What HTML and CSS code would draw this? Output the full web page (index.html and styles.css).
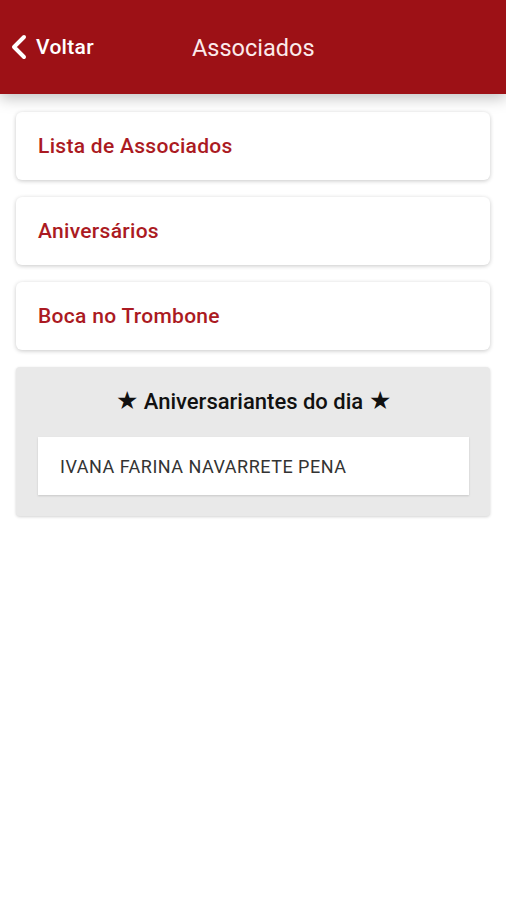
FILE: index.html
```html
<!DOCTYPE html>
<html>
<head>
    <meta charset="UTF-8"/>
    <title>Associados</title>
    <link rel="stylesheet" href="styles.css">
</head>
<body>
<div class="header">
    <a class="back" href="#">
        <svg class="chevron" width="18" height="26" viewBox="0 0 18 26">
            <path d="M14 3 L4 13 L14 23" fill="none" stroke="#fff" stroke-width="4" stroke-linecap="round" stroke-linejoin="round"/>
        </svg>
        <span>Voltar</span>
    </a>
    <div class="title">Associados</div>
</div>
<div class="content">
    <a class="card" href="#">Lista de Associados</a>
    <a class="card" href="#">Aniversários</a>
    <a class="card" href="#">Boca no Trombone</a>
    <div class="panel">
        <div class="panelTitle"><span class="star">★</span> Aniversariantes do dia <span class="star">★</span></div>
        <div class="person">IVANA FARINA NAVARRETE PENA</div>
    </div>
</div>
</body>
</html>
```
FILE: styles.css
```css
*{
    margin: 0;
    padding: 0;
    box-sizing: border-box;
}
body{
    font-family: Roboto, "Liberation Sans", sans-serif;
    background: #fff;
    width: 506px;
    height: 900px;
}
.header{
    position: relative;
    height: 94px;
    background: #9d1116;
    box-shadow: 0 4px 14px rgba(0,0,0,0.25);
    display: flex;
    align-items: center;
    color: #fff;
    z-index: 1;
}
.back{
    display: flex;
    align-items: center;
    padding-left: 10px;
    color: #fff;
    text-decoration: none;
    font-size: 21px;
    font-weight: 500;
    letter-spacing: 0.3px;
}
.chevron{
    margin-right: 8px;
}
.title{
    position: absolute;
    left: 192px;
    top: 0;
    line-height: 97px;
    font-size: 23.5px;
    color: #fbeaea;
}
.content{
    padding: 18px 16px;
    display: flex;
    flex-direction: column;
    gap: 17px;
}
.card{
    height: 68px;
    display: flex;
    align-items: center;
    padding-left: 22px;
    background: #fff;
    border-radius: 6px;
    box-shadow: 0 1px 4px rgba(0,0,0,0.22);
    color: #ab1a22;
    font-size: 21px;
    font-weight: 500;
    letter-spacing: 0.3px;
    text-decoration: none;
}
.panel{
    background: #e9e9e9;
    border-radius: 4px;
    box-shadow: 0 1px 3px rgba(0,0,0,0.18);
    padding: 22px 21px 21px 22px;
}
.panelTitle{
    text-align: center;
    font-size: 22px;
    font-weight: 500;
    color: #111;
    line-height: 26px;
}
.star{
    font-size: 25px;
    line-height: 20px;
}
.person{
    margin-top: 22px;
    height: 58px;
    background: #fff;
    box-shadow: 0 1px 2px rgba(0,0,0,0.15);
    display: flex;
    align-items: center;
    padding-left: 22px;
    font-size: 18px;
    letter-spacing: 0.5px;
    color: #333;
}
```
